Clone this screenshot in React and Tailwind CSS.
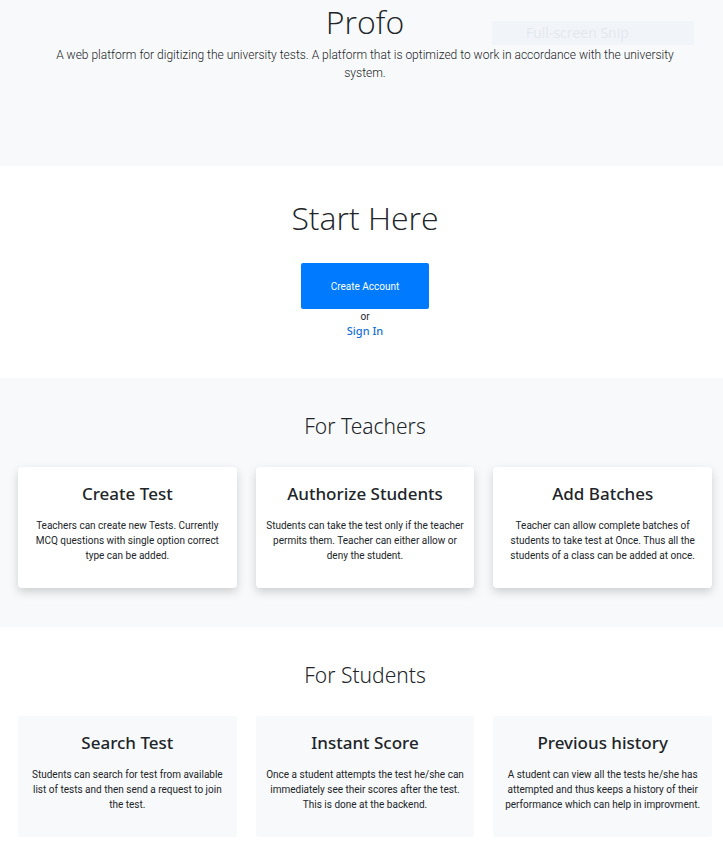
const teachers = [
  { title: "Create Test", text: "Teachers can create new Tests. Currently MCQ questions with single option correct type can be added." },
  { title: "Authorize Students", text: "Students can take the test only if the teacher permits them. Teacher can either allow or deny the student." },
  { title: "Add Batches", text: "Teacher can allow complete batches of students to take test at Once. Thus all the students of a class can be added at once." },
];

const students = [
  { title: "Search Test", text: "Students can search for test from available list of tests and then send a request to join the test." },
  { title: "Instant Score", text: "Once a student attempts the test he/she can immediately see their scores after the test. This is done at the backend." },
  { title: "Previous history", text: "A student can view all the tests he/she has attempted and thus keeps a history of their performance which can help in improvment." },
];

function Card({ title, text, raised }) {
  return (
    <article className={`px-[10px] pt-4 pb-[25px] text-center ${raised ? "rounded-sm bg-white shadow-[0_4px_10px_rgba(0,0,0,0.17)]" : "rounded-xs bg-[#f8f9fa]"}`}>
      <h3 className="font-['Noto_Sans',sans-serif] text-[17px] leading-[22px] font-medium">{title}</h3>
      <p className="mt-[13px] text-[10px] leading-[15px]">{text}</p>
    </article>
  );
}

function Features({ title, cards, raised }) {
  return (
    <section className={`pt-8 pr-[11px] pb-[39px] pl-[18px] ${raised ? "bg-[#f8f9fa]" : "bg-white"}`}>
      <h2 className="text-center font-['Noto_Sans',sans-serif] text-[21px] leading-8 font-light">{title}</h2>
      <div className="mt-[25px] grid grid-cols-3 gap-[19px]">
        {cards.map((card) => (
          <Card key={card.title} {...card} raised={raised} />
        ))}
      </div>
    </section>
  );
}

export default function App() {
  return (
    <main className="bg-white font-[Roboto,sans-serif] text-[#212529]">
      <header className="relative bg-[#f8f9fa] pr-9 pb-[84px] pl-[43px] text-center">
        <h1 className="font-['Open_Sans',sans-serif] text-[32px] leading-[44px] font-light">Profo</h1>
        <p className="mt-[2px] text-[12px] leading-[18px] font-light">
          A web platform for digitizing the university tests. A platform that is optimized to work in accordance with the university system.
        </p>
        <div className="absolute top-[21px] right-[29px] h-6 w-[202px] bg-[#f1f5fa] pl-[34px] text-left font-['Open_Sans',sans-serif] text-[14px] leading-6 text-[#e4e8ec]">
          Full-screen Snip
        </div>
      </header>
      <section className="flex flex-col items-center pt-7 pb-10 pl-[7px]">
        <h2 className="font-['Open_Sans',sans-serif] text-[32px] leading-[48px] font-light">Start Here</h2>
        <button type="button" className="mt-[21px] h-[46px] w-32 rounded-xs bg-[#007bff] text-[10px] text-white">
          Create Account
        </button>
        <span className="text-[10px] leading-[15px]">or</span>
        <a href="#signin" className="font-['Noto_Sans',sans-serif] text-[11px] leading-[14px] font-medium text-[#1670d6]">
          Sign In
        </a>
      </section>
      <Features title="For Teachers" cards={teachers} raised />
      <Features title="For Students" cards={students} />
    </main>
  );
}
